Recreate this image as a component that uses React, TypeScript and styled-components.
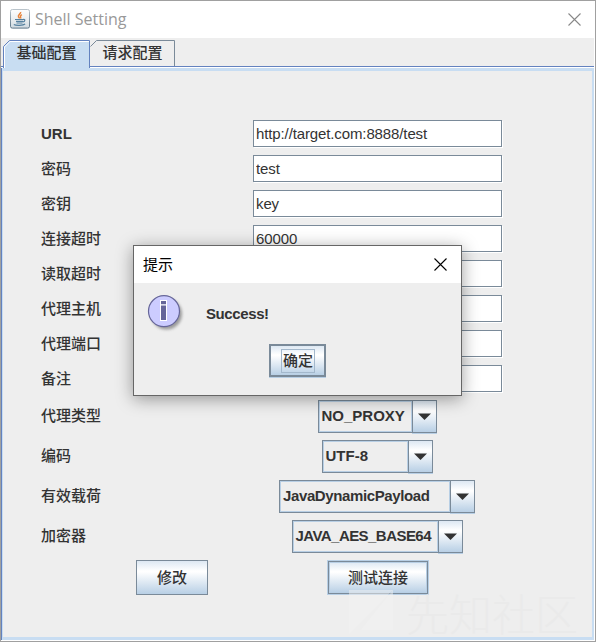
import React from 'react';
import styled, { createGlobalStyle, css } from 'styled-components';

const GlobalStyle = createGlobalStyle`
  *, *::before, *::after { box-sizing: border-box; }
  html, body { margin: 0; padding: 0; }
  body {
    width: 596px;
    height: 642px;
    overflow: hidden;
    background: #fff;
    color: #333;
    font-family: "Liberation Sans", "Noto Sans CJK SC", sans-serif;
  }
`;

const Window = styled.main`
  position: relative;
  display: flex;
  flex-direction: column;
  width: 596px;
  height: 642px;
  border: 1px solid #a0a0a0;
  background: #fff;
`;

const TitleBar = styled.header`
  display: flex;
  align-items: center;
  flex: none;
  height: 37px;
  padding: 0 14px 1px 9px;
  background: #fff;
`;

const WindowTitle = styled.h1`
  flex: 1;
  margin: 0 0 0 5px;
  font: 400 16px/22px "Open Sans", "Noto Sans", sans-serif;
  color: #999;
`;

const IconButton = styled.button`
  display: flex;
  padding: 0;
  border: 0;
  background: none;
`;

const TabStrip = styled.nav`
  display: flex;
  flex: none;
  height: 30px;
  margin-right: 1px;
  padding: 2px 0 0 2px;
  background:
    linear-gradient(#6382bf, #6382bf) 0 28px / 100% 1px no-repeat,
    linear-gradient(#fff, #fff) 0 29px / 100% 1px no-repeat,
    #eee;
`;

const Tab = styled.button<{ $active?: boolean }>`
  position: relative;
  display: flex;
  justify-content: center;
  width: ${p => (p.$active ? 87 : 85)}px;
  height: ${p => (p.$active ? 28 : 26)}px;
  padding: 0;
  border: 0;
  background: none;
  color: #333;
  font: 700 15px/25px "Liberation Sans", "Noto Sans CJK SC", sans-serif;
`;

const TabShape = styled.svg`
  position: absolute;
  inset: 0;
`;

const TabText = styled.span`
  position: relative;
  font-weight: 500;
`;

const Panel = styled.section`
  flex: 1;
  padding: 49px 0 0 38px;
  margin: 0 1px 1px 1px;
  border: solid #c8ddf2;
  border-width: 3px 2px 3px 1px;
  box-shadow: -1px 0 #6382bf;
  background: #eee;
`;

const FieldList = styled.div`
  display: grid;
  grid-auto-rows: 35px;
`;

const FieldRow = styled.label`
  display: grid;
  grid-template-columns: 212px 250px;
  align-items: start;
`;

const Label = styled.span<{ $latin?: boolean }>`
  font-size: 15px;
  line-height: 27px;
  font-weight: ${p => (p.$latin ? 700 : 500)};
`;

const Field = styled.input`
  width: 249px;
  height: 27px;
  padding: 0 2px;
  border: 1px solid #7a8a99;
  border-radius: 0;
  outline: 0;
  background: #fff;
  box-shadow: 1px 1px 0 #fff;
  color: #333;
  font: 15px/25px "Liberation Sans", sans-serif;
  letter-spacing: -0.12px;
`;

const ComboList = styled.div`
  display: grid;
  grid-auto-rows: 40px;
`;

const ComboRow = styled.div`
  display: grid;
  grid-template-columns: 212px 248px;
  align-items: start;
  justify-items: start;
`;

const ComboLabel = styled(Label)`
  line-height: 31px;
`;

const Combo = styled.div<{ $w: number }>`
  display: flex;
  justify-self: center;
  width: ${p => p.$w}px;
  height: 33px;
`;

const ComboValue = styled.span<{ $track: number }>`
  flex: 1;
  min-width: 0;
  padding-left: 3px;
  border: 1px solid #7a8a99;
  border-right: 0;
  box-shadow: inset 0 0 0 1px #b8cfe5;
  font: 700 15px/30px "Liberation Sans", sans-serif;
  letter-spacing: ${p => p.$track}px;
  white-space: nowrap;
`;

const steel = css`
  background: linear-gradient(#dde8f3 0%, #fff 30%, #fff 33%, #b8cfe5 100%);
`;

const ComboArrow = styled.span`
  display: flex;
  align-items: center;
  justify-content: center;
  flex: none;
  width: 25px;
  border: 1px solid #7a8a99;
  box-shadow: 0 1px #b8cfe5;
  ${steel}
`;

const Actions = styled.div`
  display: flex;
  gap: 120px;
  padding: 0 0 0 95px;
`;

const Button = styled.button<{ $w: number; $h: number; $kind?: 'hover' | 'default' }>`
  display: flex;
  align-items: center;
  justify-content: center;
  width: ${p => p.$w}px;
  height: ${p => p.$h}px;
  padding: 0;
  border: ${p => (p.$kind === 'default' ? 2 : 1)}px solid #7a8a99;
  color: #333;
  font: 500 15px/20px "Liberation Sans", "Noto Sans CJK SC", sans-serif;
  ${steel}
  ${p => p.$kind === 'hover' && css`margin-top: 1px; box-shadow: 0 0 0 1px #b8cfe5, inset 0 0 0 1px #b8cfe5;`}
  ${p => p.$kind === 'default' && css`box-shadow: 0 1px #b8cfe5;`}
`;

const FocusFrame = styled.span`
  margin-left: 1px;
  padding: 0 1px 1px;
  border: 1px solid #a3b8cc;
  line-height: 21px;
`;

const Dialog = styled.section`
  position: absolute;
  left: 132px;
  top: 244px;
  width: 329px;
  height: 151px;
  border: 1px solid #666;
  background: #eee;
  box-shadow: 0 3px 16px rgba(0, 0, 0, 0.38);
`;

const DialogHeader = styled.header`
  display: flex;
  align-items: center;
  justify-content: space-between;
  height: 37px;
  padding: 0 14px 1px 9px;
  background: #fff;
  color: #000;
  font: 400 15px/22px "Noto Sans CJK SC", sans-serif;
`;

const DialogBody = styled.div`
  display: flex;
  align-items: flex-start;
  gap: 20px;
  height: 61px;
  padding: 11px 0 0 13px;
`;

const Message = styled.p`
  margin: 10px 0 0;
  font: 700 15px/20px "Liberation Sans", sans-serif;
  letter-spacing: -0.4px;
`;

const DialogActions = styled.footer`
  display: flex;
  justify-content: center;
`;

const Watermark = styled.div`
  position: absolute;
  right: 17px;
  bottom: 6px;
  display: flex;
  align-items: center;
  gap: 13px;
  color: #eaeaea;
  font: 300 43px/46px "Noto Sans CJK SC", sans-serif;
  pointer-events: none;
`;

const CloseGlyph = ({ color }: { color: string }) => (
  <svg width="13" height="13" viewBox="0 0 13 13" stroke={color} strokeWidth="1.1" fill="none">
    <path d="M.5 .5L12.5 12.5M12.5 .5L.5 12.5" />
  </svg>
);

const JavaIcon = () => (
  <svg width="20" height="20" viewBox="0 0 20 20">
    <defs>
      <linearGradient id="tile" x1="0" y1="0" x2="0" y2="1">
        <stop offset="0" stopColor="#fdfdfd" />
        <stop offset=".5" stopColor="#eceff1" />
        <stop offset="1" stopColor="#cfd9e0" />
      </linearGradient>
      <linearGradient id="edge" x1="0" y1="0" x2="0" y2="1">
        <stop offset="0" stopColor="#b9c3ca" />
        <stop offset="1" stopColor="#5b7486" />
      </linearGradient>
    </defs>
    <rect x=".5" y=".5" width="19" height="18.6" rx="1.8" fill="url(#tile)" stroke="url(#edge)" />
    <path d="M10.6 3c.7 1.7-3.2 2.7-2.1 4.8.3.7 1 1.2 1 1.8M11.800 5.600c-2.400 1.400-1.300 2-1 3.900" fill="none" stroke="#e8833a" strokeWidth="1.5" />
    <path d="M5 10.500h8M6 12.300h7M6.500 14h6M12.900 10.500c2.800-.6 2.300 2.200-.2 2.500" fill="none" stroke="#55809f" strokeWidth="1.2" />
    <path d="M3.800 15.400c2 1.300 9.500 1.200 11.300-.4" fill="none" stroke="#55809f" strokeWidth="1.2" />
  </svg>
);

const InfoIcon = () => (
  <svg width="39" height="39" viewBox="0 0 39 39">
    <defs>
      <filter id="soft" x="-20%" y="-20%" width="150%" height="150%">
        <feGaussianBlur stdDeviation="1.5" />
      </filter>
    </defs>
    <circle cx="19.500" cy="20" r="15.500" fill="#777" opacity=".7" filter="url(#soft)" />
    <circle cx="17" cy="17.200" r="15.500" fill="#ccf" stroke="#669" strokeWidth="1.2" />
    <g fill="#669" stroke="#fff" strokeWidth="1">
      <rect x="13.500" y="6.500" width="6" height="4.500" />
      <rect x="13.500" y="11" width="6" height="15.500" />
    </g>
  </svg>
);

const Triangle = () => (
  <svg width="13" height="7" viewBox="0 0 13 7">
    <path d="M0 0.500H13L6.500 7z" fill="#333" />
  </svg>
);

const fields: [string, string][] = [
  ['URL', 'http://target.com:8888/test'],
  ['密码', 'test'],
  ['密钥', 'key'],
  ['连接超时', '60000'],
  ['读取超时', '60000'],
  ['代理主机', '127.0.0.1'],
  ['代理端口', '8888'],
  ['备注', ''],
];

const combos = [
  { label: '代理类型', value: 'NO_PROXY', width: 119, track: 0 },
  { label: '编码', value: 'UTF-8', width: 111, track: 0 },
  { label: '有效载荷', value: 'JavaDynamicPayload', width: 196, track: -0.38 },
  { label: '加密器', value: 'JAVA_AES_BASE64', width: 171, track: -0.55 },
];

export default function App() {
  return (
    <>
      <GlobalStyle />
      <Window>
        <TitleBar>
          <JavaIcon />
          <WindowTitle>Shell Setting</WindowTitle>
          <IconButton aria-label="Close"><CloseGlyph color="#888" /></IconButton>
        </TitleBar>
        <TabStrip>
          <Tab $active>
            <TabShape width="87" height="28" viewBox="0 0 87 28">
              <path d="M.5 28V6.500L6.500 .5H86.500V28" fill="#c8ddf2" stroke="#6382bf" />
              <path d="M1.500 28V7L7 1.500H86" fill="none" stroke="#fff" />
            </TabShape>
            <TabText>基础配置</TabText>
          </Tab>
          <Tab>
            <TabShape width="85" height="26" viewBox="0 0 85 26">
              <path d="M.5 6.500L6.500 .5H84.500V26" fill="none" stroke="#7a8a99" />
            </TabShape>
            <TabText>请求配置</TabText>
          </Tab>
        </TabStrip>
        <Panel>
          <FieldList>
            {fields.map(([label, value]) => (
              <FieldRow key={label}>
                <Label $latin={label === 'URL'}>{label}</Label>
                <Field defaultValue={value} />
              </FieldRow>
            ))}
          </FieldList>
          <ComboList>
            {combos.map(c => (
              <ComboRow key={c.label}>
                <ComboLabel>{c.label}</ComboLabel>
                <Combo $w={c.width}>
                  <ComboValue $track={c.track}>{c.value}</ComboValue>
                  <ComboArrow><Triangle /></ComboArrow>
                </Combo>
              </ComboRow>
            ))}
          </ComboList>
          <Actions>
            <Button $w={72} $h={35}>修改</Button>
            <Button $w={100} $h={33} $kind="hover">测试连接</Button>
          </Actions>
        </Panel>
        <Watermark>
          <svg width="44" height="44" viewBox="0 0 44 44" fill="#f2f2f2" opacity=".5">
            <path d="M0 0H44L0 44zM44 0V40H12z" />
          </svg>
          先知社区
        </Watermark>
        <Dialog role="dialog">
          <DialogHeader>
            提示
            <IconButton aria-label="Close"><CloseGlyph color="#000" /></IconButton>
          </DialogHeader>
          <DialogBody>
            <InfoIcon />
            <Message>Success!</Message>
          </DialogBody>
          <DialogActions>
            <Button $w={57} $h={33} $kind="default"><FocusFrame>确定</FocusFrame></Button>
          </DialogActions>
        </Dialog>
      </Window>
    </>
  );
}
